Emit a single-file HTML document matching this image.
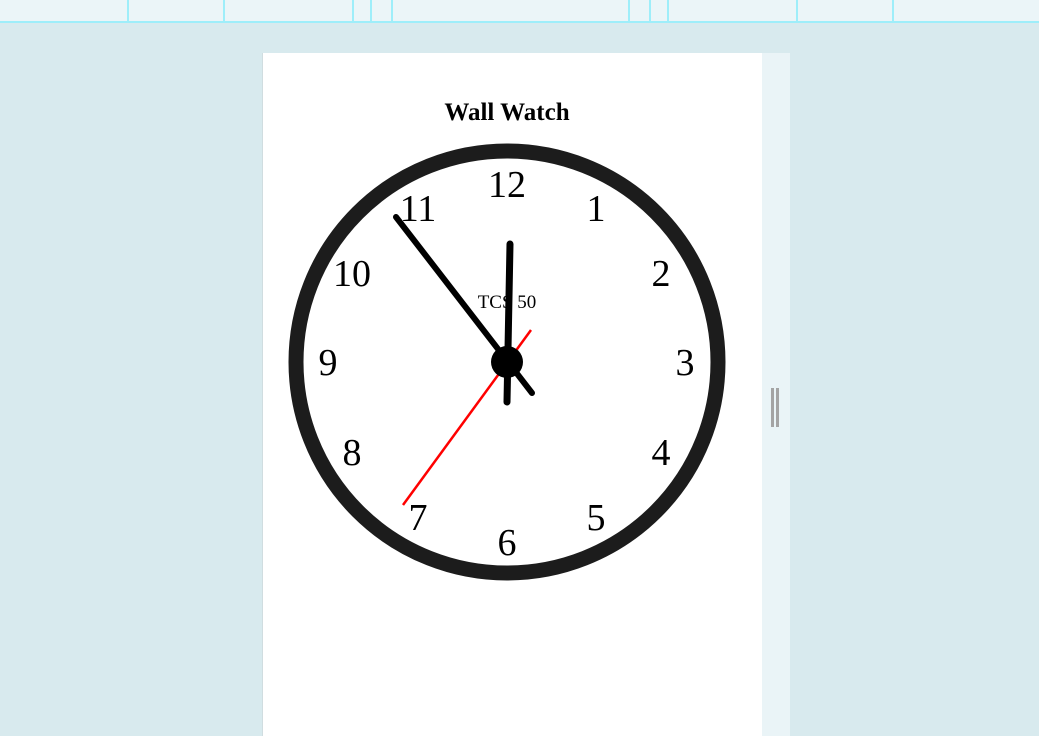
<!DOCTYPE html>
<html><head><style>
body{margin:0;width:1039px;height:736px;background:#d8eaee;position:relative;overflow:hidden;font-family:"Liberation Serif",serif}
.top{position:absolute;left:0;top:0;width:1039px;height:21px;background:#ebf5f8;border-bottom:2px solid #9eeefa}
.vl{position:absolute;top:0;width:2px;height:21px;background:#9eeefa}
.panel{position:absolute;left:262px;top:53px;width:500px;height:683px;background:#fff;border-left:1px solid #d0dde0}
.strip{position:absolute;left:762px;top:53px;width:28px;height:683px;background:#eaf4f7}
.h{position:absolute;top:388px;width:3px;height:39px;background:#a4a4a4}
</style></head><body>
<div class="top">
<div class="vl" style="left:127px"></div><div class="vl" style="left:223px"></div><div class="vl" style="left:352px"></div><div class="vl" style="left:370px"></div><div class="vl" style="left:391px"></div><div class="vl" style="left:628px"></div><div class="vl" style="left:649px"></div><div class="vl" style="left:667px"></div><div class="vl" style="left:796px"></div><div class="vl" style="left:892px"></div>
</div>
<div class="panel"></div>
<div class="strip"></div>
<div class="h" style="left:771px"></div><div class="h" style="left:776px"></div>
<svg width="1039" height="736" style="position:absolute;left:0;top:0">
<text x="507" y="120" text-anchor="middle" font-size="25" font-weight="bold" font-family="Liberation Serif">Wall Watch</text>
<circle cx="507" cy="362" r="211" fill="#fff" stroke="#1c1c1c" stroke-width="15"/>
<g font-size="38" text-anchor="middle" font-family="Liberation Serif">
<text x="507" y="197">12</text><text x="596" y="221">1</text><text x="661" y="286">2</text><text x="685" y="375">3</text><text x="661" y="465">4</text><text x="596" y="530">5</text><text x="507" y="555">6</text><text x="418" y="530">7</text><text x="352" y="465">8</text><text x="328" y="375">9</text><text x="352" y="286">10</text><text x="418" y="221">11</text>
</g>
<text x="507" y="308" text-anchor="middle" font-size="19">TCS 50</text>
<line x1="396" y1="217" x2="532" y2="393" stroke="#000" stroke-width="6" stroke-linecap="round"/>
<line x1="510" y1="244" x2="507" y2="402" stroke="#000" stroke-width="7" stroke-linecap="round"/>
<line x1="531" y1="330" x2="403" y2="505" stroke="#f00" stroke-width="2.5"/>
<circle cx="507" cy="362" r="16" fill="#000"/>
</svg>
</body></html>
